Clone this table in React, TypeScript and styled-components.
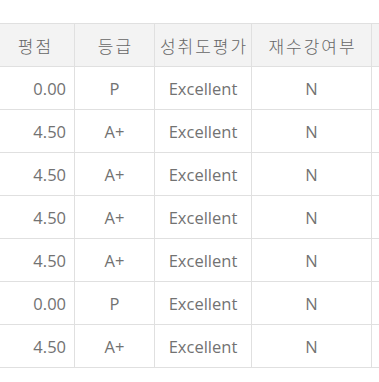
import React from 'react';
import styled, { createGlobalStyle } from 'styled-components';

const Global = createGlobalStyle`
    body {
        margin: 0;
        background: #fff;
        font-family: "Open Sans", "Noto Sans CJK KR", sans-serif;
    }
`;

const S = {
    Viewport: styled.div`
        width: 379px;
        height: 382px;
        overflow: hidden;
        padding-top: 23px;
        box-sizing: border-box;
    `,
    Table: styled.table`
        margin-left: -6px;
        border-collapse: collapse;
        table-layout: fixed;
        width: 497px;
        font-size: 16.5px;
        color: #727272;
    `,
    HeadCell: styled.th`
        height: 42px;
        padding: 0 0 0 2px;
        background-color: #f3f3f3;
        border: 1px solid #e0e0e0;
        font-family: "Noto Sans CJK KR", sans-serif;
        font-size: 17px;
        font-weight: 300;
        letter-spacing: 2px;
        color: #666;
        text-align: center;
        white-space: nowrap;
    `,
    Cell: styled.td<{ $align?: 'left' | 'center' | 'right' }>`
        height: 42px;
        padding: 0 8px;
        border: 1px solid #e0e0e0;
        text-align: ${(p) => p.$align || 'center'};
        white-space: nowrap;
    `
};

const rows = [
    { score: '0.00', grade: 'P', eval: 'Excellent', retake: 'N' },
    { score: '4.50', grade: 'A+', eval: 'Excellent', retake: 'N' },
    { score: '4.50', grade: 'A+', eval: 'Excellent', retake: 'N' },
    { score: '4.50', grade: 'A+', eval: 'Excellent', retake: 'N' },
    { score: '4.50', grade: 'A+', eval: 'Excellent', retake: 'N' },
    { score: '0.00', grade: 'P', eval: 'Excellent', retake: 'N' },
    { score: '4.50', grade: 'A+', eval: 'Excellent', retake: 'N' }
];

const App = () => {
    return (
        <S.Viewport>
            <Global />
            <S.Table>
                <colgroup>
                    <col style={{ width: 80 }} />
                    <col style={{ width: 80 }} />
                    <col style={{ width: 97 }} />
                    <col style={{ width: 120 }} />
                    <col style={{ width: 120 }} />
                </colgroup>
                <thead>
                    <tr>
                        <S.HeadCell>평점</S.HeadCell>
                        <S.HeadCell>등급</S.HeadCell>
                        <S.HeadCell>성취도평가</S.HeadCell>
                        <S.HeadCell>재수강여부</S.HeadCell>
                        <S.HeadCell></S.HeadCell>
                    </tr>
                </thead>
                <tbody>
                    {rows.map((r, i) => (
                        <tr key={i}>
                            <S.Cell $align="right">{r.score}</S.Cell>
                            <S.Cell>{r.grade}</S.Cell>
                            <S.Cell>{r.eval}</S.Cell>
                            <S.Cell>{r.retake}</S.Cell>
                            <S.Cell></S.Cell>
                        </tr>
                    ))}
                </tbody>
            </S.Table>
        </S.Viewport>
    );
};

export default App;
